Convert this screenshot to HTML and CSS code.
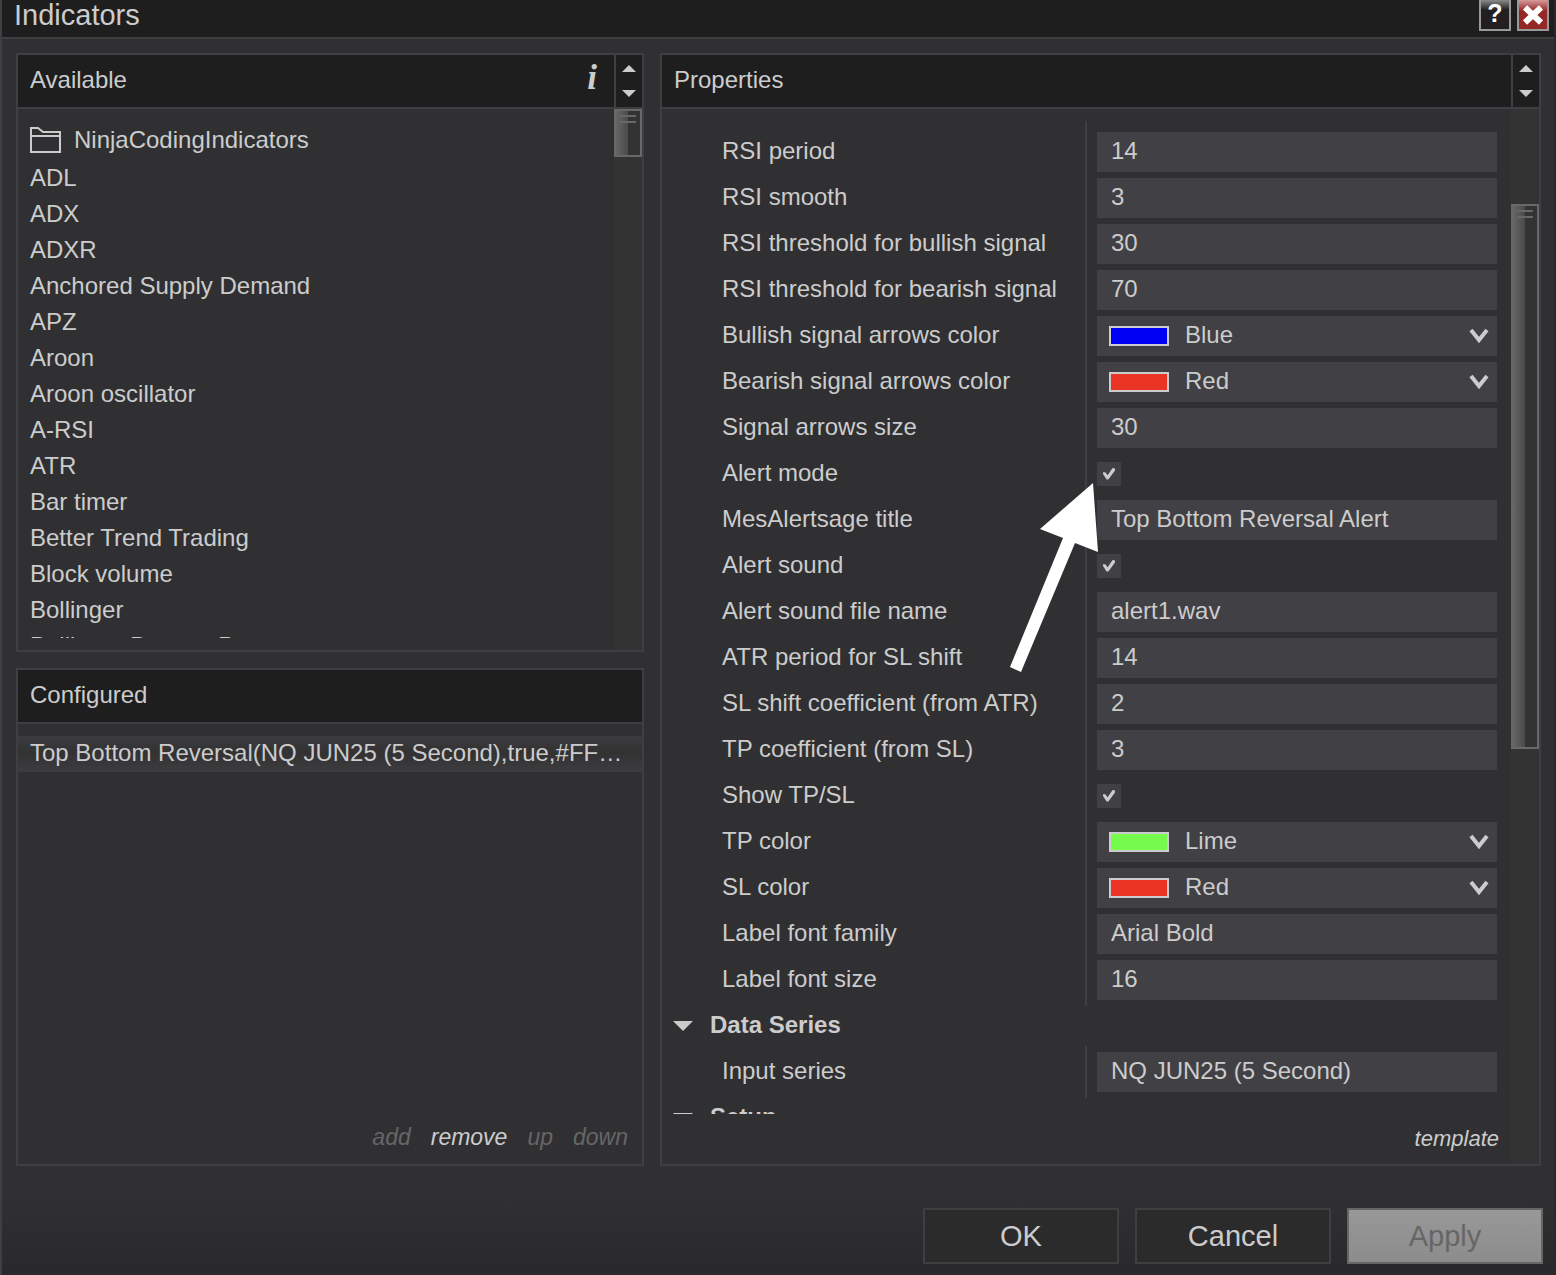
FILE: index.html
```html
<!DOCTYPE html>
<html lang="en">
<head>
  <meta charset="UTF-8">
  <meta name="viewport" content="width=device-width, initial-scale=1.0">
  <title>Indicators</title>
  <link rel="stylesheet" href="styles.css">
</head>
<body>
  <header class="titlebar">
    <h1>Indicators</h1>
    <button type="button" class="window-button help" aria-label="Help">?</button>
    <button type="button" class="window-button close" aria-label="Close">
      <svg width="22" height="22" viewBox="0 0 22 22"><path d="M3 3.500L19 18.500M19 3.500L3 18.500" stroke="#fff" stroke-width="6"/></svg>
    </button>
  </header>

  <main class="content">
    <div class="sidebar">
      <section class="panel available">
        <div class="panel-header">
          <h2>Available</h2>
          <button type="button" class="info" aria-label="Info">i</button>
          <div class="spinner">
            <button type="button" class="up" aria-label="Previous"></button>
            <button type="button" class="down" aria-label="Next"></button>
          </div>
        </div>
        <div class="panel-body">
          <ul class="indicator-list">
            <li class="folder">
              <svg width="32" height="28" viewBox="0 0 32 28" fill="none" stroke="#ccc" stroke-width="2"><path d="M1 26V2H8L13 6H30V26ZM2 10H29"/></svg>
              NinjaCodingIndicators
            </li>
            <li>ADL</li>
            <li>ADX</li>
            <li>ADXR</li>
            <li>Anchored Supply Demand</li>
            <li>APZ</li>
            <li>Aroon</li>
            <li>Aroon oscillator</li>
            <li>A-RSI</li>
            <li>ATR</li>
            <li>Bar timer</li>
            <li>Better Trend Trading</li>
            <li>Block volume</li>
            <li>Bollinger</li>
            <li>Bollinger Bounce Pro</li>
          </ul>
          <div class="scrollbar"><div class="thumb"></div></div>
        </div>
      </section>

      <section class="panel configured">
        <div class="panel-header">
          <h2>Configured</h2>
        </div>
        <ul class="configured-list">
          <li class="selected">Top Bottom Reversal(NQ JUN25 (5 Second),true,#FF…</li>
        </ul>
        <div class="actions">
          <button type="button" disabled>add</button>
          <button type="button">remove</button>
          <button type="button" disabled>up</button>
          <button type="button" disabled>down</button>
        </div>
      </section>
    </div>

    <section class="panel properties">
      <div class="panel-header">
        <h2>Properties</h2>
        <div class="spinner">
          <button type="button" class="up" aria-label="Previous"></button>
          <button type="button" class="down" aria-label="Next"></button>
        </div>
      </div>
      <div class="panel-body">
        <div class="property-area">
          <form class="property-list">
            <div class="group">
              <div class="row">
                <label for="rsi-period">RSI period</label>
                <input type="text" id="rsi-period" value="14">
              </div>
              <div class="row">
                <label for="rsi-smooth">RSI smooth</label>
                <input type="text" id="rsi-smooth" value="3">
              </div>
              <div class="row">
                <label for="rsi-bullish">RSI threshold for bullish signal</label>
                <input type="text" id="rsi-bullish" value="30">
              </div>
              <div class="row">
                <label for="rsi-bearish">RSI threshold for bearish signal</label>
                <input type="text" id="rsi-bearish" value="70">
              </div>
              <div class="row">
                <label for="bullish-color">Bullish signal arrows color</label>
                <div class="color-field">
                  <span class="swatch blue"></span>
                  <select id="bullish-color"><option>Blue</option></select>
                  <svg class="chevron" width="20" height="16" viewBox="0 0 20 16"><path d="M2 2L10 12L18 2" fill="none" stroke="#ccc" stroke-width="4"/></svg>
                </div>
              </div>
              <div class="row">
                <label for="bearish-color">Bearish signal arrows color</label>
                <div class="color-field">
                  <span class="swatch red"></span>
                  <select id="bearish-color"><option>Red</option></select>
                  <svg class="chevron" width="20" height="16" viewBox="0 0 20 16"><path d="M2 2L10 12L18 2" fill="none" stroke="#ccc" stroke-width="4"/></svg>
                </div>
              </div>
              <div class="row">
                <label for="arrow-size">Signal arrows size</label>
                <input type="text" id="arrow-size" value="30">
              </div>
              <div class="row pointed">
                <label for="alert-mode">Alert mode</label>
                <input type="checkbox" id="alert-mode" checked>
                <svg class="pointer" width="90" height="190" viewBox="0 0 90 190"><path d="M84 0L89 69L66 60L12 189L1 184L54 55L31 46Z" fill="#fff"/></svg>
              </div>
              <div class="row">
                <label for="alert-title">MesAlertsage title</label>
                <input type="text" id="alert-title" value="Top Bottom Reversal Alert">
              </div>
              <div class="row">
                <label for="alert-sound">Alert sound</label>
                <input type="checkbox" id="alert-sound" checked>
              </div>
              <div class="row">
                <label for="sound-file">Alert sound file name</label>
                <input type="text" id="sound-file" value="alert1.wav">
              </div>
              <div class="row">
                <label for="atr-period">ATR period for SL shift</label>
                <input type="text" id="atr-period" value="14">
              </div>
              <div class="row">
                <label for="sl-shift">SL shift coefficient (from ATR)</label>
                <input type="text" id="sl-shift" value="2">
              </div>
              <div class="row">
                <label for="tp-coef">TP coefficient (from SL)</label>
                <input type="text" id="tp-coef" value="3">
              </div>
              <div class="row">
                <label for="show-tpsl">Show TP/SL</label>
                <input type="checkbox" id="show-tpsl" checked>
              </div>
              <div class="row">
                <label for="tp-color">TP color</label>
                <div class="color-field">
                  <span class="swatch lime"></span>
                  <select id="tp-color"><option>Lime</option></select>
                  <svg class="chevron" width="20" height="16" viewBox="0 0 20 16"><path d="M2 2L10 12L18 2" fill="none" stroke="#ccc" stroke-width="4"/></svg>
                </div>
              </div>
              <div class="row">
                <label for="sl-color">SL color</label>
                <div class="color-field">
                  <span class="swatch red"></span>
                  <select id="sl-color"><option>Red</option></select>
                  <svg class="chevron" width="20" height="16" viewBox="0 0 20 16"><path d="M2 2L10 12L18 2" fill="none" stroke="#ccc" stroke-width="4"/></svg>
                </div>
              </div>
              <div class="row">
                <label for="font-family">Label font family</label>
                <input type="text" id="font-family" value="Arial Bold">
              </div>
              <div class="row">
                <label for="font-size">Label font size</label>
                <input type="text" id="font-size" value="16">
              </div>
            </div>
            <h3>Data Series</h3>
            <div class="group">
              <div class="row">
                <label for="input-series">Input series</label>
                <input type="text" id="input-series" value="NQ JUN25 (5 Second)">
              </div>
            </div>
            <h3>Setup</h3>
          </form>
          <div class="template">
            <a href="#">template</a>
          </div>
        </div>
        <div class="scrollbar"><div class="thumb"></div></div>
      </div>
    </section>
  </main>

  <footer class="buttons">
    <button type="button">OK</button>
    <button type="button">Cancel</button>
    <button type="button" disabled>Apply</button>
  </footer>
</body>
</html>
```
FILE: styles.css
```css
* {
  box-sizing: border-box;
}
body {
  margin: 0;
  height: 100vh;
  display: flex;
  flex-direction: column;
  overflow: hidden;
  border-left: 2px solid #3f3f43;
  border-right: 2px solid #29292a;
  background: linear-gradient(#303032, #303032 94%, #29292b);
  color: #ccc;
  font-family: "Liberation Sans", Arial, sans-serif;
  font-size: 24px;
  line-height: 36px;
}
h1, h2, h3, ul {
  margin: 0;
  padding: 0;
}
ul {
  list-style: none;
}
button, input, select {
  font: inherit;
  color: inherit;
  border: none;
  margin: 0;
  padding: 0;
  background: none;
  border-radius: 0;
}

/* title bar */
.titlebar {
  display: flex;
  gap: 6px;
  height: 39px;
  flex: none;
  padding: 0 5px 0 12px;
  background: #1e1e1e;
  border-bottom: 2px solid #3f3f43;
}
.titlebar h1 {
  flex: 1;
  font-size: 29px;
  font-weight: normal;
  line-height: 30px;
}
.window-button {
  display: flex;
  align-items: center;
  justify-content: center;
  width: 32px;
  height: 31px;
  border: 2px solid #999;
  border-top: none;
  color: #fff;
}
.help {
  background: linear-gradient(#8a8a8a, #231f20 10px);
  font-size: 25px;
  font-weight: bold;
  line-height: 26px;
  padding-bottom: 3px;
}
.close {
  background: linear-gradient(#d69a9a, #942826 11px);
}

/* layout */
.content {
  flex: 1;
  min-height: 0;
  display: grid;
  grid-template-columns: 628px 1fr;
  gap: 16px;
  padding: 14px 13px 0 14px;
}
.sidebar {
  display: grid;
  grid-template-rows: 599fr 498fr;
  gap: 16px;
  min-height: 0;
}
.panel {
  display: flex;
  flex-direction: column;
  min-width: 0;
  min-height: 0;
  border: 2px solid #3f3f43;
}
.panel-header {
  display: flex;
  flex: none;
  height: 54px;
  padding-left: 12px;
  background: #1e1e1e;
  border-bottom: 2px solid #3f3f43;
}
.panel-header h2 {
  flex: 1;
  font-size: 24px;
  font-weight: normal;
  line-height: 50px;
}
.panel-body {
  flex: 1;
  min-height: 0;
  display: flex;
}
.info {
  width: 44px;
  padding-bottom: 6px;
  font-family: "Liberation Serif", serif;
  font-size: 35px;
  font-style: italic;
  font-weight: bold;
  line-height: 44px;
}
.spinner {
  display: flex;
  flex-direction: column;
  align-items: center;
  justify-content: center;
  gap: 18px;
  width: 28px;
  border-left: 2px solid #3f3f43;
}
.spinner button {
  width: 14px;
  height: 7px;
  background: #ccc;
}
.spinner .up {
  clip-path: polygon(50% 0, 100% 100%, 0 100%);
}
.spinner .down {
  clip-path: polygon(0 0, 100% 0, 50% 100%);
}

/* scrollbars */
.scrollbar {
  width: 28px;
  flex: none;
  background: #333;
}
.thumb {
  height: 48px;
  border: 2px solid #686868;
  background:
    linear-gradient(#686868, #686868) 4px 4px / 16px 2px no-repeat,
    linear-gradient(#686868, #686868) 4px 10px / 16px 2px no-repeat,
    linear-gradient(to right, #666, #4a4a4a) 0 0 / 12px 100% no-repeat,
    #333;
}
.properties .thumb {
  height: 545px;
  margin-top: 95px;
}

/* available and configured lists */
.indicator-list {
  flex: 1;
  padding: 13px 12px 0;
  margin-bottom: 12px;
  overflow: hidden;
}
.indicator-list .folder {
  display: flex;
  align-items: center;
  gap: 12px;
  height: 38px;
  padding-bottom: 2px;
}
.configured-list {
  flex: 1;
  padding-top: 12px;
}
.configured-list li {
  padding: 0 12px;
  line-height: 34px;
  white-space: nowrap;
  overflow: hidden;
}
.configured-list .selected {
  border-bottom: 2px solid #3c3c3f;
  background: linear-gradient(#3c3c3f, #323233 50%, #3c3c3f);
}
.actions {
  display: flex;
  justify-content: flex-end;
  gap: 20px;
  padding: 0 14px 9px;
}
.actions button {
  font-size: 23px;
  font-style: italic;
}
.actions button:disabled {
  color: #666;
}

/* properties */
.property-area {
  flex: 1;
  min-width: 0;
  display: flex;
  flex-direction: column;
}
.property-list {
  flex: 1;
  min-height: 0;
  margin-top: 12px;
  overflow: hidden;
}
.group {
  padding: 3px 14px 3px 60px;
  margin: -3px 0;
  background: linear-gradient(#3f3f43, #3f3f43) 423px 0 / 2px 100% no-repeat;
}
.group:first-child {
  padding-top: 8px;
  margin-top: 0;
}
.row {
  display: flex;
  align-items: center;
  height: 46px;
}
.row label {
  width: 375px;
  padding-bottom: 2px;
}
.row input[type="text"] {
  flex: 1;
  min-width: 0;
  height: 40px;
  padding: 0 14px 2px;
  background: #414045;
}
.row input[type="checkbox"] {
  appearance: none;
  width: 24px;
  height: 24px;
  padding: 6px;
  background: #414045;
}
.row input[type="checkbox"]:checked::before {
  content: "";
  display: block;
  width: 12px;
  height: 12px;
  background: #ccc;
  clip-path: polygon(0 35%, 20% 35%, 38% 60%, 80% 0, 100% 5%, 100% 20%, 45% 95%, 30% 95%, 0 50%);
}
.color-field {
  flex: 1;
  display: flex;
  align-items: center;
  gap: 16px;
  height: 40px;
  padding: 0 8px 0 12px;
  background: #414045;
}
.color-field select {
  flex: 1;
  height: 40px;
  padding-bottom: 2px;
  appearance: none;
}
.swatch {
  width: 60px;
  height: 20px;
  border: 2px solid #ccc;
}
.blue {
  background: #0000f5;
}
.red {
  background: #ea3323;
}
.lime {
  background: #75fb4c;
}
.pointed {
  position: relative;
}
.pointer {
  position: absolute;
  left: 287px;
  top: 32px;
}
.property-list h3 {
  display: flex;
  align-items: center;
  gap: 17px;
  height: 46px;
  padding: 0 0 2px 11px;
  font-size: 24px;
}
.property-list h3::before {
  content: "";
  width: 20px;
  height: 10px;
  margin-top: 2px;
  background: #ccc;
  clip-path: polygon(0 0, 100% 0, 50% 100%);
}
.template {
  height: 50px;
  padding: 7px 12px 0;
  text-align: right;
  font-size: 22px;
  font-style: italic;
}
.template a {
  color: #ccc;
  text-decoration: none;
}

/* dialog buttons */
.buttons {
  display: flex;
  justify-content: flex-end;
  gap: 16px;
  flex: none;
  padding: 42px 11px 11px;
}
.buttons button {
  width: 196px;
  height: 56px;
  border: 2px solid #3f3f41;
  background: #2b2b2c;
  font-size: 29px;
}
.buttons button:disabled {
  border-color: #666;
  background: linear-gradient(#989898, #8c8c8c);
  color: #666;
}
```
